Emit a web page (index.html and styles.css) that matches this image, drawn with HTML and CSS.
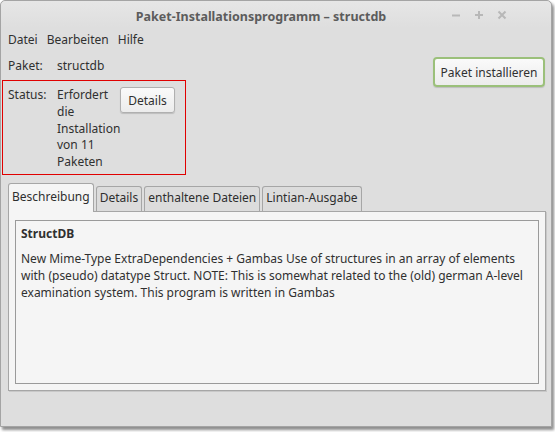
FILE: index.html
```html
<!DOCTYPE html>
<html>
<head>
<meta charset="utf-8">
<link rel="stylesheet" href="styles.css">
</head>
<body>
<div class="window">
  <div class="titlebar">
    <div class="title">Paket-Installationsprogramm – structdb</div>
    <div class="controls">
      <svg width="10" height="10" viewBox="0 0 10 10"><path d="M1 5.5H9" stroke="#b8b8b8" stroke-width="2"/></svg>
      <svg width="10" height="10" viewBox="0 0 10 10"><path d="M1 5H9M5 1V9" stroke="#b8b8b8" stroke-width="2"/></svg>
      <svg width="10" height="10" viewBox="0 0 10 10"><path d="M1.5 1.5L8.5 8.5M8.5 1.5L1.5 8.5" stroke="#b8b8b8" stroke-width="2"/></svg>
    </div>
  </div>
  <div class="menubar">
    <span>Datei</span><span>Bearbeiten</span><span>Hilfe</span>
  </div>
  <div class="top">
    <div class="info">
      <div class="row pkg"><span class="lbl">Paket:</span><span>structdb</span></div>
      <div class="row status">
        <span class="lbl">Status:</span>
        <span class="stext">Erfordert die Installation von 11 Paketen</span>
        <button class="btn details">Details</button>
      </div>
    </div>
    <button class="btn install">Paket installieren</button>
  </div>
  <div class="notebook">
    <div class="tabs">
      <div class="tab active">Beschreibung</div>
      <div class="tab">Details</div>
      <div class="tab">enthaltene Dateien</div>
      <div class="tab">Lintian-Ausgabe</div>
    </div>
    <div class="page">
      <div class="textview">
        <div class="heading">StructDB</div>
        <p>New Mime-Type ExtraDependencies + Gambas Use of structures in an array of elements with (pseudo) datatype Struct. NOTE: This is somewhat related to the (old) german A-level examination system. This program is written in Gambas</p>
      </div>
    </div>
  </div>
</div>
</body>
</html>
```
FILE: styles.css
```css
html, body { margin: 0; padding: 0; background: #ffffff; }
body { width: 555px; height: 432px; overflow: hidden; font-family: "Noto Sans", sans-serif; font-size: 12px; color: #303030; }
.window {
  box-sizing: border-box;
  width: 552px; height: 427px;
  background: #dedede;
  border: 1px solid #a4a4a4;
  border-radius: 5px 5px 0 0;
  box-shadow: 2px 3px 3px rgba(0,0,0,0.45);
  display: flex; flex-direction: column;
}
.titlebar {
  height: 27px; position: relative;
  display: flex; align-items: center; justify-content: center;
  padding-right: 30px;
  background: linear-gradient(#e6e6e6, #dedede);
  border-radius: 5px 5px 0 0;
}
.title { font-weight: bold; font-size: 12.5px; color: #5c5c5c; padding-top: 3px; }
.controls { position: absolute; right: 44px; top: 9px; display: flex; gap: 13px; }
.menubar { display: flex; gap: 9px; padding: 1px 0 0 7px; height: 22px; line-height: 22px; }
.top { display: flex; justify-content: space-between; align-items: flex-start; padding: 0 6px 0 1px; }
.info { display: flex; flex-direction: column; }
.row { display: flex; }
.lbl { width: 49px; flex: none; }
.pkg { padding: 6px 0 0 6px; height: 23px; line-height: 17px; }
.status {
  box-sizing: border-box; width: 184px; height: 95px;
  border: 1px solid #e00000; padding: 6px 0 0 5px; line-height: 16.8px;
}
.stext { width: 63px; }
.btn {
  font-family: "Noto Sans", sans-serif; font-size: 12px; color: #303030;
  background: linear-gradient(#fafafa, #ececec);
  border: 1px solid #b0b0b0; border-radius: 3px;
  box-shadow: 0 1px 1px rgba(0,0,0,0.15);
  padding: 0; margin: 0;
}
.details { width: 55px; height: 26px; margin: 0; }
.install {
  margin-top: 6px; width: 112px; height: 30px;
  border: 2px solid #9bc07a; border-radius: 4px;
}
.notebook { display: flex; flex-direction: column; padding: 0 5px 0 7px; margin-top: 7px; }
.tabs { display: flex; gap: 2px; align-items: flex-end; height: 29px; position: relative; z-index: 1; }
.tab {
  box-sizing: border-box; height: 25px; line-height: 22px; padding: 0 3px;
  background: #dcdcdc; border: 1px solid #a6a6a6; border-bottom: none;
  border-radius: 3px 3px 0 0; color: #2e2e2e;
}
.tab.active { height: 29px; line-height: 26px; background: #f5f5f5; padding: 0 3px; margin-bottom: -1px; }
.page {
  box-sizing: border-box; height: 180px; background: #f5f5f5;
  border: 1px solid #a6a6a6; padding: 8px 6px 6px 6px;
  box-shadow: 1px 1px 0 #c8c8c8;
}
.textview {
  box-sizing: border-box; height: 100%; border: 1px solid #9a9a9a; background: #f5f5f5;
  padding: 4px 5px;
}
.heading { font-weight: bold; line-height: 17px; }
p { margin: 8px 0 0 0; line-height: 17px; }
```
